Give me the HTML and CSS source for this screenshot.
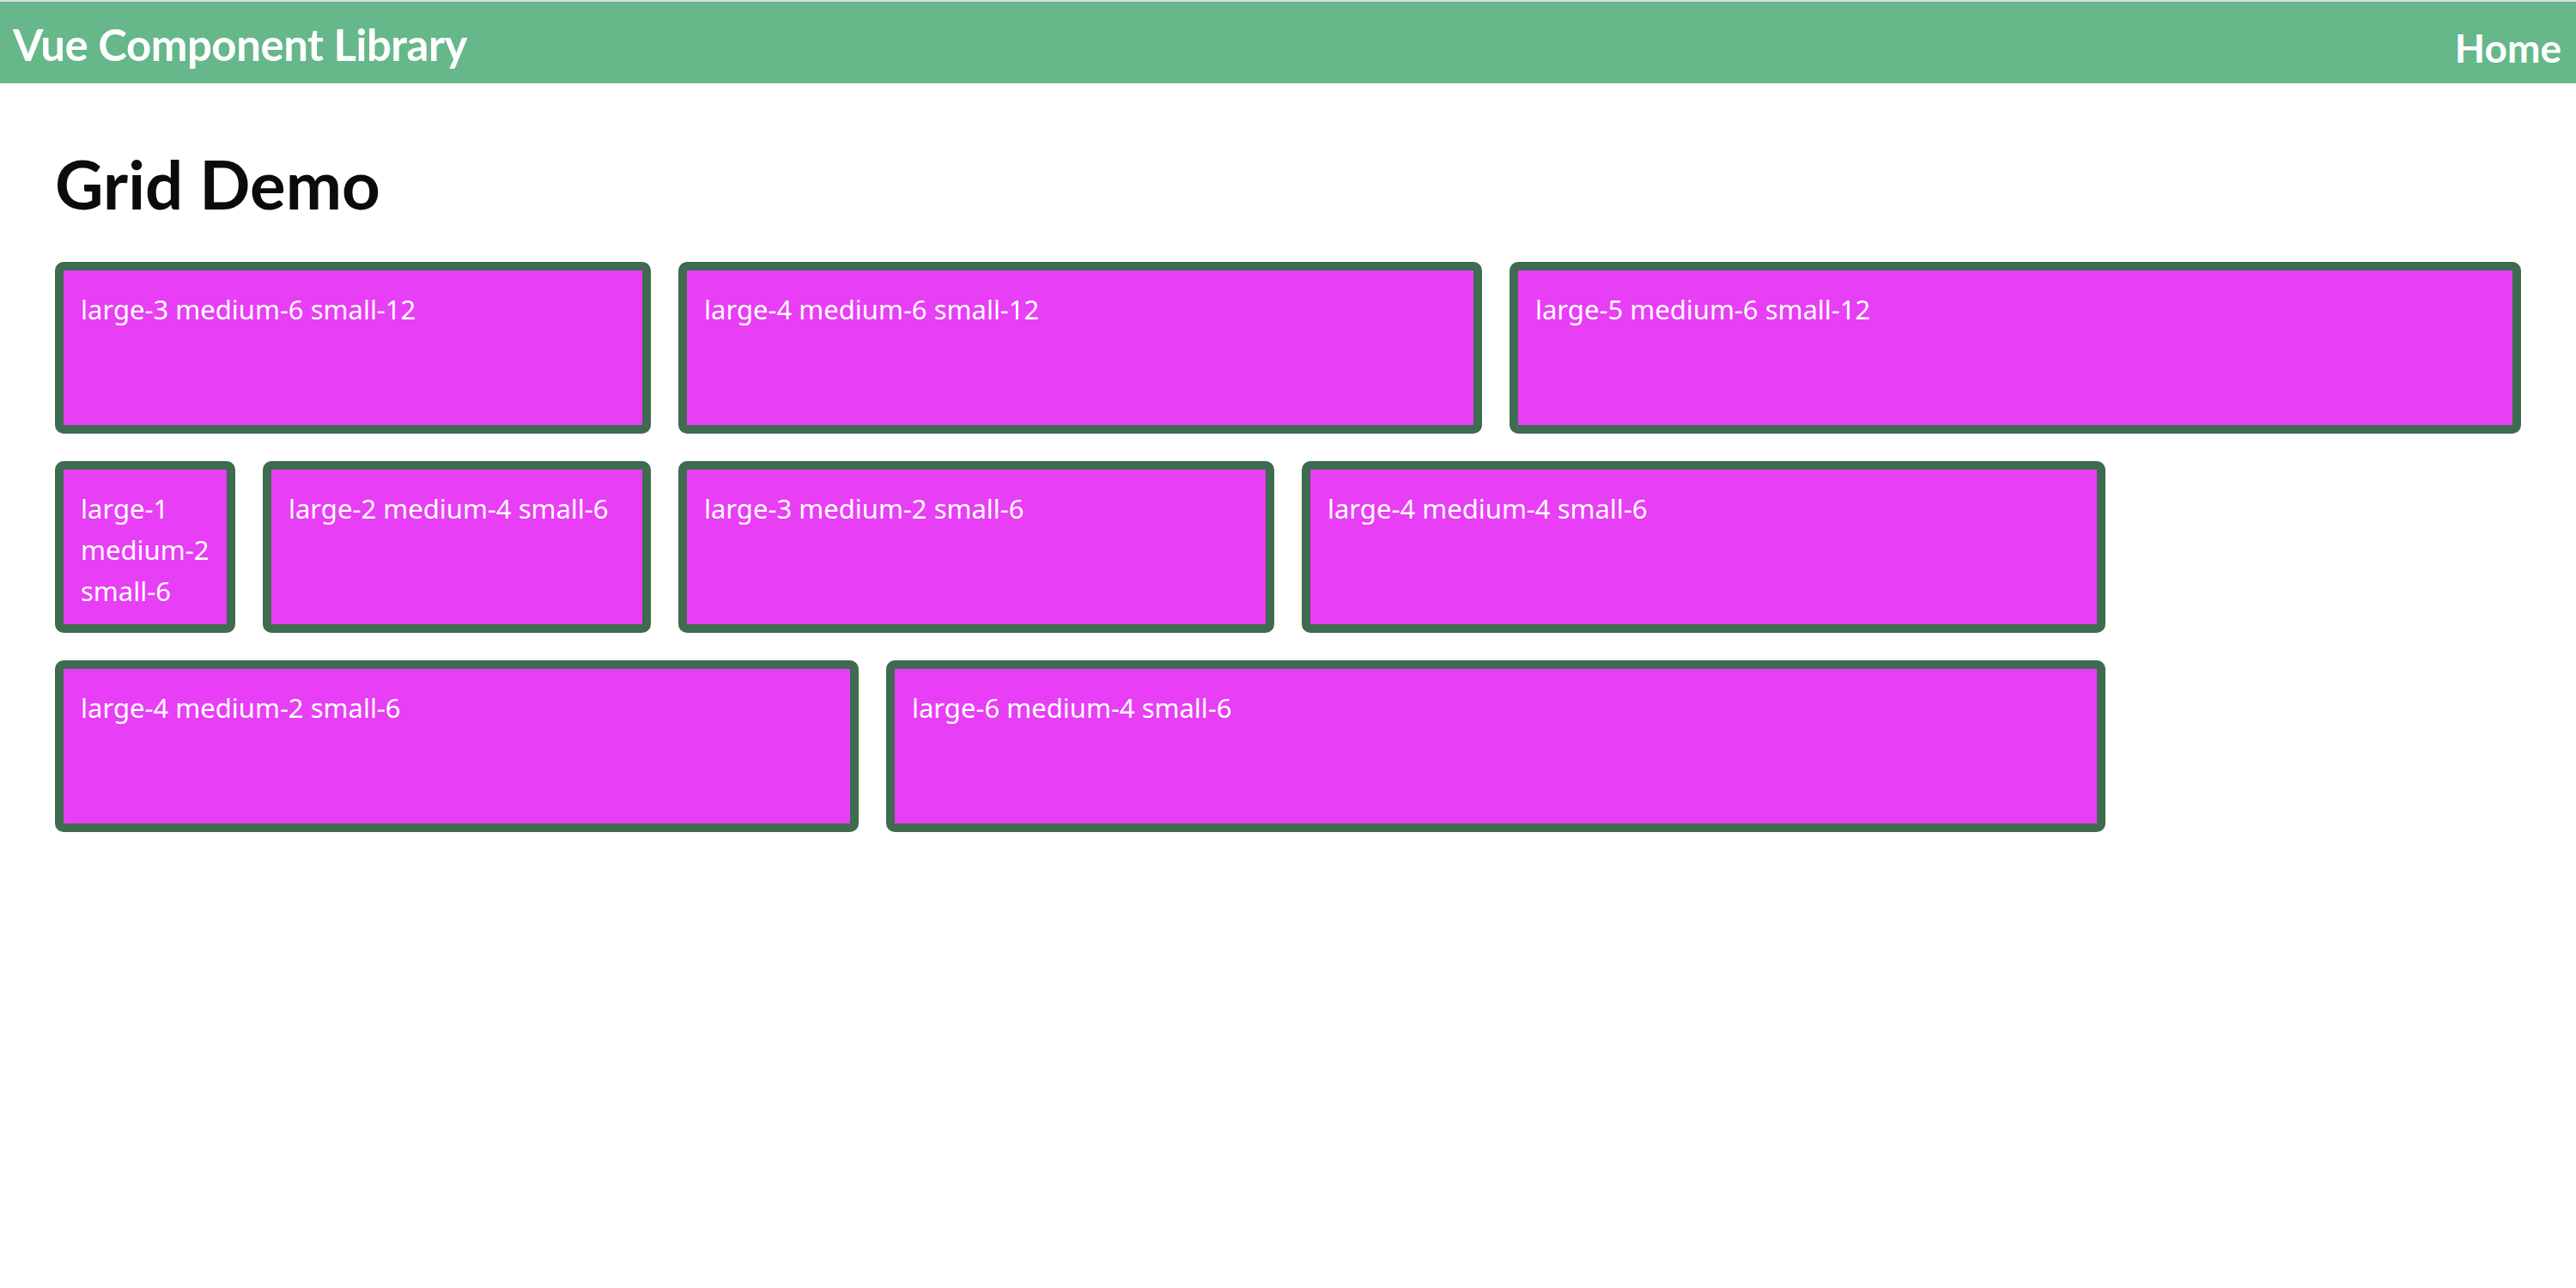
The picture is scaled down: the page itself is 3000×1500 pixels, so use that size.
FILE: index.html
```html
<!DOCTYPE html>
<html lang="en">
<head>
<meta charset="utf-8">
<title>Grid Demo</title>
<link rel="stylesheet" href="styles.css">
</head>
<body>
<header class="topbar">
  <div class="brand">Vue Component Library</div>
  <nav class="nav"><a class="nav-link" href="#">Home</a></nav>
</header>
<main class="page">
  <h1 class="page-title">Grid Demo</h1>
  <div class="grid">
    <div class="cell large-3"><div class="box">large-3 medium-6 small-12</div></div>
    <div class="cell large-4"><div class="box">large-4 medium-6 small-12</div></div>
    <div class="cell large-5"><div class="box">large-5 medium-6 small-12</div></div>
    <div class="cell large-1"><div class="box">large-1 medium-2 small-6</div></div>
    <div class="cell large-2"><div class="box">large-2 medium-4 small-6</div></div>
    <div class="cell large-3"><div class="box">large-3 medium-2 small-6</div></div>
    <div class="cell large-4"><div class="box">large-4 medium-4 small-6</div></div>
    <div class="cell large-4"><div class="box">large-4 medium-2 small-6</div></div>
    <div class="cell large-6"><div class="box">large-6 medium-4 small-6</div></div>
  </div>
</main>
</body>
</html>
```
FILE: styles.css
```css
html, body {
  margin: 0;
  padding: 0;
  background: #ffffff;
}
body {
  font-family: "Noto Sans", "Open Sans", sans-serif;
}
.topbar {
  border-top: 2px solid #dcdcdc;
  background: #66b78a;
  height: 95px;
  display: flex;
  justify-content: space-between;
  align-items: flex-start;
  padding: 0 17px 0 15px;
}
.brand {
  font-family: "Lato", sans-serif;
  font-weight: 700;
  font-size: 51px;
  line-height: 1;
  letter-spacing: -0.5px;
  color: #ffffff;
  margin-top: 24px;
}
.nav-link {
  display: block;
  font-family: "Lato", sans-serif;
  font-weight: 700;
  font-size: 46px;
  line-height: 1;
  color: #ffffff;
  text-decoration: none;
  margin-top: 31px;
}
.page {
  padding: 0 48px;
}
.page-title {
  font-family: "Lato", sans-serif;
  font-weight: 700;
  font-size: 78px;
  line-height: 1;
  color: #0b0b0b;
  margin: 78px 0 36px;
  padding: 0 16px;
}
.grid {
  display: flex;
  flex-wrap: wrap;
}
.cell {
  box-sizing: border-box;
  padding: 16px;
}
.box {
  box-sizing: border-box;
  min-height: 200px;
  border: 10px solid #3f6b50;
  border-radius: 10px;
  background: #e83ef5;
  color: #ffffff;
  font-size: 31px;
  line-height: 48px;
  padding: 21px 20px 15px;
}
.large-1 { width: 8.3333%; }
.large-2 { width: 16.6667%; }
.large-3 { width: 25%; }
.large-4 { width: 33.3333%; }
.large-5 { width: 41.6667%; }
.large-6 { width: 50%; }
```
